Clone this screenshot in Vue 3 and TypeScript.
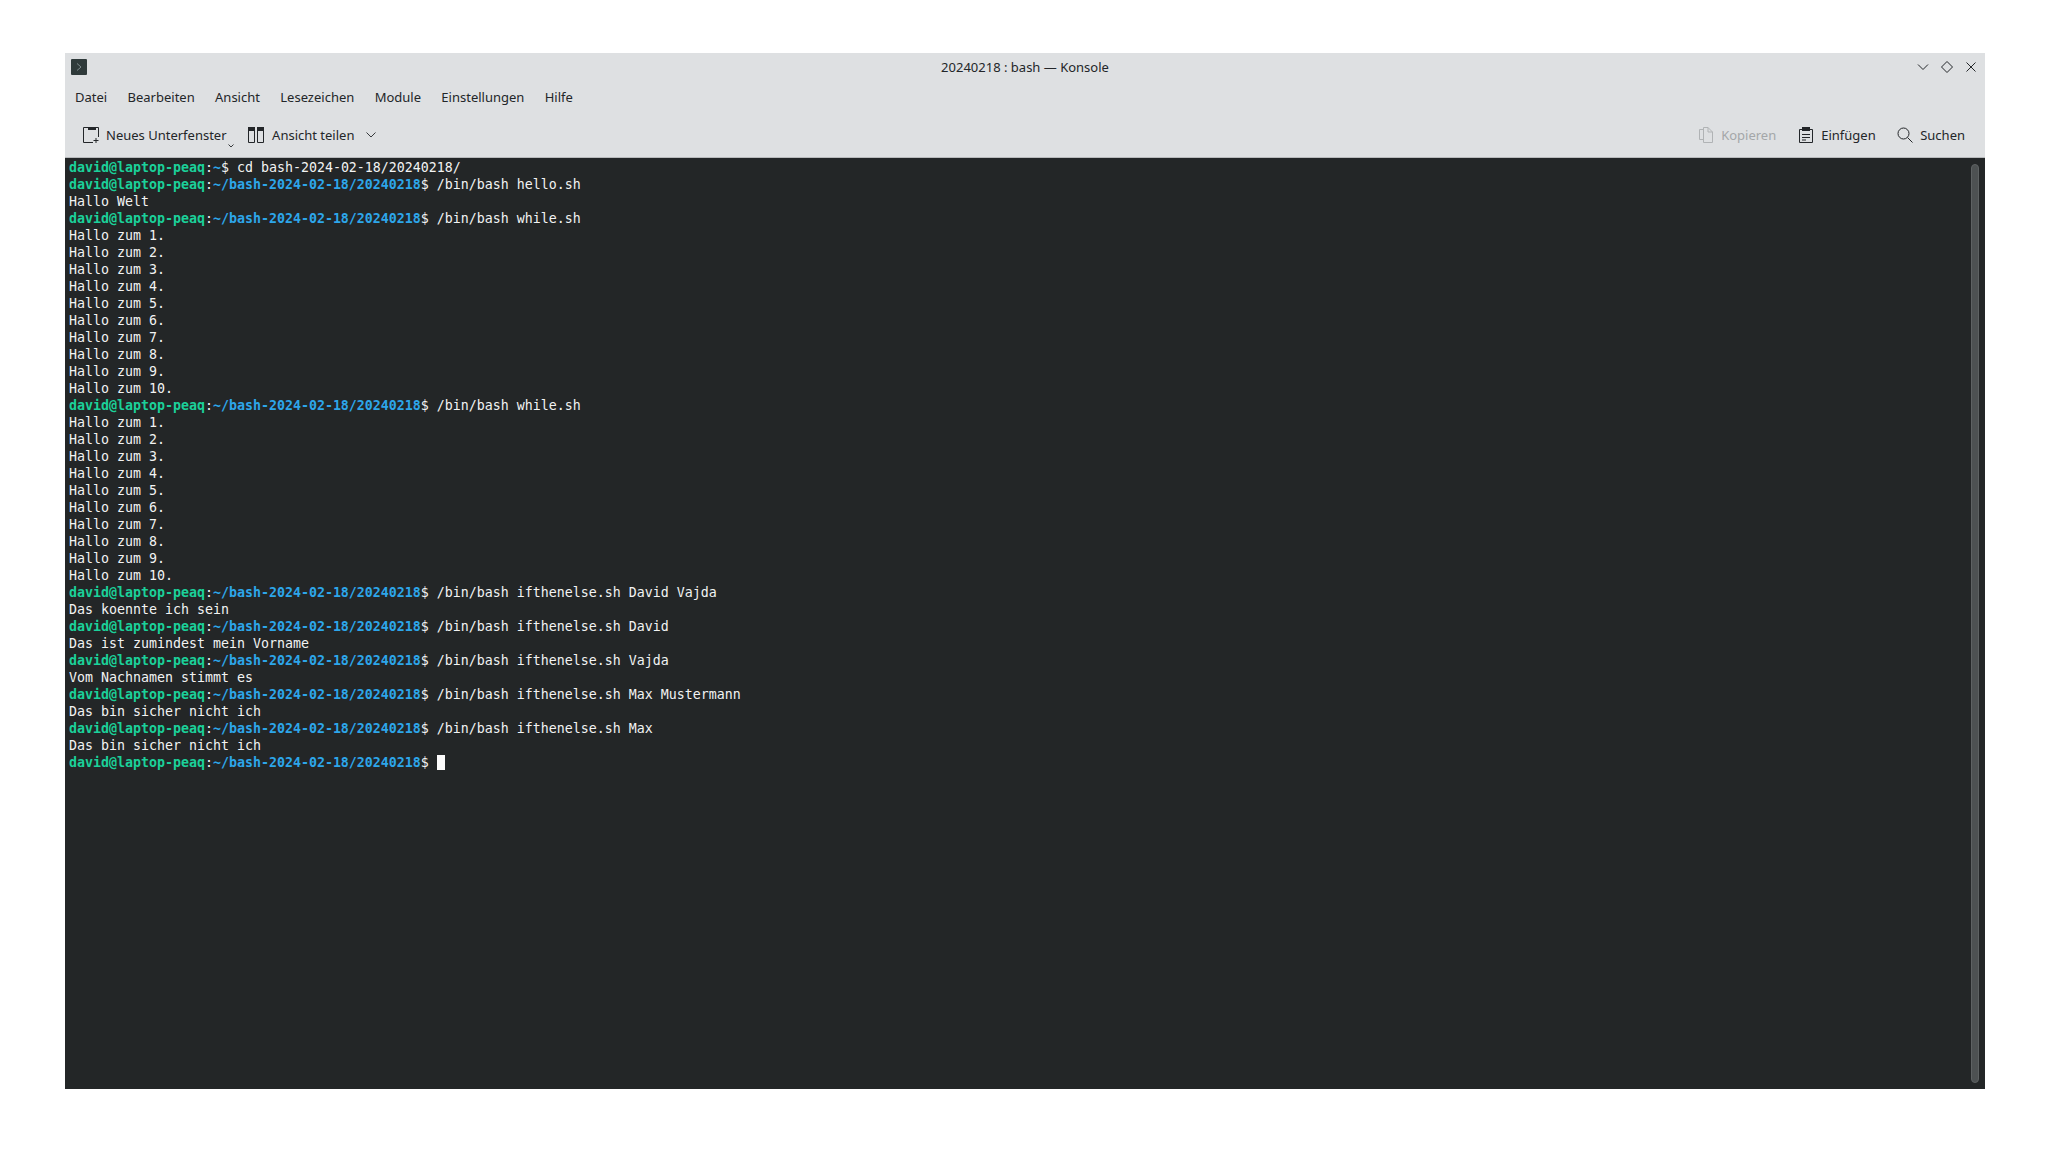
<script setup lang="ts">
interface Seg { t: string; c: string }
const P = '~/bash-2024-02-18/20240218'
function prompt(cmd: string, path: string = P): Seg[] {
  return [
    { t: 'david@laptop-peaq', c: 'user' },
    { t: ':', c: 'plain' },
    { t: path, c: 'path' },
    { t: '$ ' + cmd, c: 'plain' },
  ]
}
const out = (t: string): Seg[] => [{ t, c: 'plain' }]
const count: Seg[][] = Array.from({ length: 10 }, (_, i) => out(`Hallo zum ${i + 1}.`))
const lines: Seg[][] = [
  [
    { t: 'david@laptop-peaq', c: 'user' },
    { t: ':', c: 'plain' },
    { t: '~', c: 'path' },
    { t: '$ cd bash-2024-02-18/20240218/', c: 'plain' },
  ],
  prompt('/bin/bash hello.sh'),
  out('Hallo Welt'),
  prompt('/bin/bash while.sh'),
  ...count,
  prompt('/bin/bash while.sh'),
  ...count,
  prompt('/bin/bash ifthenelse.sh David Vajda'),
  out('Das koennte ich sein'),
  prompt('/bin/bash ifthenelse.sh David'),
  out('Das ist zumindest mein Vorname'),
  prompt('/bin/bash ifthenelse.sh Vajda'),
  out('Vom Nachnamen stimmt es'),
  prompt('/bin/bash ifthenelse.sh Max Mustermann'),
  out('Das bin sicher nicht ich'),
  prompt('/bin/bash ifthenelse.sh Max'),
  out('Das bin sicher nicht ich'),
]
const menus = ['Datei', 'Bearbeiten', 'Ansicht', 'Lesezeichen', 'Module', 'Einstellungen', 'Hilfe']
</script>

<template>
  <div class="page">
    <div class="window">
      <header class="titlebar">
        <span class="app-icon">
          <svg width="10" height="10" viewBox="0 0 10 10"><path d="M3 1.5 7 5 3 8.5" fill="none" stroke="#7f8c8d" stroke-width="1" /></svg>
        </span>
        <span class="title">20240218 : bash — Konsole</span>
        <div class="win-btns">
          <svg width="14" height="14" viewBox="0 0 14 14"><path d="M2 4.5 7 9.5 12 4.5" fill="none" stroke="#232629" /></svg>
          <svg width="14" height="14" viewBox="0 0 14 14"><path d="M7 1.5 12.5 7 7 12.5 1.5 7Z" fill="none" stroke="#232629" /></svg>
          <svg width="14" height="14" viewBox="0 0 14 14"><path d="M2.5 2.5 11.5 11.5M11.5 2.5 2.5 11.5" fill="none" stroke="#232629" /></svg>
        </div>
      </header>
      <nav class="menubar">
        <span v-for="m in menus" :key="m" class="menu">{{ m }}</span>
      </nav>
      <div class="toolbar">
        <button class="tool first">
          <svg width="16" height="16" viewBox="0 0 16 16" fill="none" stroke="#232629"><path d="M10 15.5H.5V.5H15.5V10" /><path d="M5 0H13V3H5Z" fill="#232629" stroke="none" /><path d="M13 11V16M10.5 13.5H15.5" /></svg>
          <span>Neues Unterfenster</span>
          <svg class="mini" width="6" height="4" viewBox="0 0 6 4"><path d="M.5 .5 3 3 5.5 .5" fill="none" stroke="#232629" stroke-width=".9" /></svg>
        </button>
        <button class="tool split">
          <svg width="16" height="16" viewBox="0 0 16 16" fill="none" stroke="#232629"><path d="M.5 .5H6.5V15.5H.5ZM9.5 .5H15.5V15.5H9.5Z" /><path d="M0 0H7V4H0ZM9 0H16V4H9Z" fill="#232629" stroke="none" /></svg>
          <span>Ansicht teilen</span>
          <svg class="chev" width="10" height="6" viewBox="0 0 10 6"><path d="M.5 .5 5 5 9.5 .5" fill="none" stroke="#232629" stroke-width=".9" /></svg>
        </button>
        <div class="spacer"></div>
        <button class="tool disabled">
          <svg width="14" height="16" viewBox="0 0 14 16" fill="none" stroke="#b0b3b5"><path d="M4 2.5H.5V12.5H4" /><path d="M4.5 .5H9L13.5 5V15.5H4.5Z" /><path d="M9 .5V5H13.5" /></svg>
          <span>Kopieren</span>
        </button>
        <button class="tool">
          <svg width="14" height="16" viewBox="0 0 14 16" fill="none" stroke="#232629"><path d="M.5 2.5H13.5V15.5H.5Z" /><path d="M3 0H11V4H3Z" fill="#232629" stroke="none" /><path d="M3 7.5H11M3 10.5H11M3 13H7" /></svg>
          <span>Einfügen</span>
        </button>
        <button class="tool last">
          <svg width="16" height="16" viewBox="0 0 16 16" fill="none" stroke="#232629"><circle cx="6.5" cy="6.5" r="5.5" /><path d="M10.5 10.5 15.5 15.5" /></svg>
          <span>Suchen</span>
        </button>
      </div>
      <main class="terminal">
        <div class="output">
          <div v-for="(line, i) in lines" :key="i" class="line"><span v-for="(s, j) in line" :key="j" :class="s.c">{{ s.t }}</span></div>
          <div class="line"><span class="user">david@laptop-peaq</span><span class="plain">:</span><span class="path">{{ P }}</span><span class="plain">$ </span><span class="cursor"></span></div>
        </div>
        <div class="scroll-thumb"></div>
      </main>
    </div>
  </div>
</template>

<style>
html, body { margin: 0; background: #fff; }
</style>

<style scoped>
.page {
  width: 2050px;
  height: 1166px;
  box-sizing: border-box;
  padding: 53px 65px 77px;
  background: #fff;
  overflow: hidden;
}
.window {
  height: 100%;
  display: flex;
  flex-direction: column;
  background: #dee0e2;
  font-family: "Noto Sans", sans-serif;
  font-size: 13px;
  color: #232629;
}
.titlebar {
  position: relative;
  height: 28px;
  display: flex;
  align-items: center;
  justify-content: center;
  flex: none;
}
.app-icon {
  position: absolute;
  left: 6px;
  top: 6px;
  width: 16px;
  height: 16px;
  background: #2f3a3a;
  border-radius: 1px;
  display: flex;
  align-items: center;
  justify-content: center;
}
.win-btns {
  position: absolute;
  right: 7px;
  top: 7px;
  display: flex;
  gap: 10px;
}
.menubar {
  height: 31px;
  flex: none;
  display: flex;
  align-items: center;
  padding-left: 10px;
  gap: 20.35px;
}
.toolbar {
  height: 45px;
  flex: none;
  display: flex;
  align-items: center;
  padding: 0 20px 0 18px;
  gap: 23px;
  border-bottom: 1px solid #b8babc;
}
.spacer { flex: 1; }
.tool {
  position: relative;
  display: flex;
  align-items: center;
  gap: 8px;
  border: 0;
  padding: 0;
  background: none;
  font: inherit;
  color: inherit;
}
.tool.first { gap: 7px; margin-right: -1.5px; }
.tool.last { gap: 7px; margin-left: -1.5px; }
.tool.disabled { color: #a4a7a9; }
.mini { position: absolute; right: -7px; bottom: -4px; }
.chev { margin-left: 4px; }
.terminal {
  position: relative;
  flex: 1;
  min-height: 0;
  background: #232627;
  padding: 1px 0 0 4px;
  overflow: hidden;
}
.line {
  height: 17px;
  line-height: 17px;
  font-family: "DejaVu Sans Mono", monospace;
  font-size: 13.29px;
  white-space: pre;
}
.plain { color: #f2f3f3; }
.user { color: #1bd19a; font-weight: 700; }
.path { color: #2da6ea; font-weight: 700; }
.cursor {
  display: inline-block;
  width: 8px;
  height: 15px;
  background: #fcfcfc;
  vertical-align: -3px;
}
.scroll-thumb {
  position: absolute;
  right: 6px;
  top: 6px;
  bottom: 6px;
  width: 8px;
  box-sizing: border-box;
  border: 1px solid #5e6263;
  border-radius: 4px;
  background: #4d5152;
}
</style>
